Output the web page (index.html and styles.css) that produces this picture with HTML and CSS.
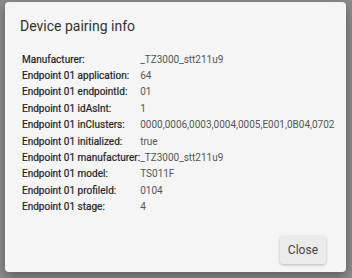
FILE: index.html
```html
<!DOCTYPE html>
<html lang="en">
<head>
    <meta charset="UTF-8">
    <title>Device pairing info</title>
    <link rel="stylesheet" href="styles.css">
</head>
<body>
    <div class="dialog">
        <h2>Device pairing info</h2>
        <table class="info">
            <tr><td>Manufacturer:</td><td>_TZ3000_stt211u9</td></tr>
            <tr><td>Endpoint 01 application:</td><td>64</td></tr>
            <tr><td>Endpoint 01 endpointId:</td><td>01</td></tr>
            <tr><td>Endpoint 01 idAsInt:</td><td>1</td></tr>
            <tr><td>Endpoint 01 inClusters:</td><td>0000,0006,0003,0004,0005,E001,0B04,0702</td></tr>
            <tr><td>Endpoint 01 initialized:</td><td>true</td></tr>
            <tr><td>Endpoint 01 manufacturer:</td><td>_TZ3000_stt211u9</td></tr>
            <tr><td>Endpoint 01 model:</td><td>TS011F</td></tr>
            <tr><td>Endpoint 01 profileId:</td><td>0104</td></tr>
            <tr><td>Endpoint 01 stage:</td><td>4</td></tr>
        </table>
        <div class="actions">
            <button>Close</button>
        </div>
    </div>
</body>
</html>
```

FILE: styles.css
```css
body {
    margin: 0;
    background: #8c8c8c;
    font-family: Roboto, Arial, sans-serif;
    height: 278px;
    overflow: hidden;
}
.dialog {
    margin: 2px 6px 0 5px;
    height: 270px;
    background: #f5f5f5;
    border-radius: 4px;
    box-shadow: 0 4px 12px rgba(0, 0, 0, 0.35);
    padding: 16px 16px 0 15px;
    box-sizing: border-box;
}
h2 {
    margin: 0 0 17px;
    font-size: 14px;
    font-weight: 400;
    color: #333;
}
.info {
    border-collapse: collapse;
    font-size: 10px;
    margin-left: 2px;
}
.info td {
    padding: 0;
    height: 16.4px;
    white-space: nowrap;
}
.info td:first-child {
    width: 118px;
    color: #1e1e1e;
    -webkit-text-stroke: 0.2px #1e1e1e;
}
.info td:last-child {
    color: #555;
}
.actions {
    display: flex;
    justify-content: flex-end;
    margin-top: 21px;
    padding-right: 4px;
}
button {
    font-family: Roboto, Arial, sans-serif;
    font-size: 12px;
    color: #444;
    background: #ebebeb;
    border: none;
    border-radius: 3px;
    padding: 7px 8px;
    box-shadow: 0 1px 3px rgba(0, 0, 0, 0.25);
}
```
